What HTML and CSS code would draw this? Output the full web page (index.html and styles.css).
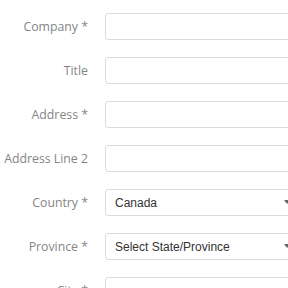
FILE: index.html
```html
<!DOCTYPE html>
<html lang="en">
<head>
    <meta charset="UTF-8">
    <meta name="viewport" content="width=device-width, initial-scale=1.0">
    <title>Contact Details</title>
    <link rel="stylesheet" href="styles.css">
</head>
<body>
    <form class="contact-form">
        <div class="form-row">
            <label class="form-label" for="company">Company *</label>
            <input class="form-input" type="text" id="company">
        </div>
        <div class="form-row">
            <label class="form-label" for="title">Title</label>
            <input class="form-input" type="text" id="title">
        </div>
        <div class="form-row">
            <label class="form-label" for="address">Address *</label>
            <input class="form-input" type="text" id="address">
        </div>
        <div class="form-row">
            <label class="form-label" for="address2">Address Line 2</label>
            <input class="form-input" type="text" id="address2">
        </div>
        <div class="form-row">
            <label class="form-label" for="country">Country *</label>
            <div class="select-wrap">
                <select class="form-input form-select" id="country">
                    <option>Canada</option>
                </select>
                <svg class="select-arrow" width="6" height="4" viewBox="0 0 6 4"><path d="M0 0h6L3 4z" fill="#666"/></svg>
            </div>
        </div>
        <div class="form-row">
            <label class="form-label" for="province">Province *</label>
            <div class="select-wrap">
                <select class="form-input form-select" id="province">
                    <option>Select State/Province</option>
                </select>
                <svg class="select-arrow" width="6" height="4" viewBox="0 0 6 4"><path d="M0 0h6L3 4z" fill="#666"/></svg>
            </div>
        </div>
        <div class="form-row">
            <label class="form-label" for="city">City *</label>
            <input class="form-input" type="text" id="city">
        </div>
    </form>
</body>
</html>
```

FILE: styles.css
```css
* {
    box-sizing: border-box;
    margin: 0;
    padding: 0;
}

body {
    background: #fff;
    overflow: hidden;
    font-family: 'Open Sans', sans-serif;
}

.contact-form {
    display: flex;
    flex-direction: column;
    gap: 17px;
    padding-top: 13px;
    width: 300px;
}

.form-row {
    display: flex;
    align-items: center;
    height: 27px;
}

.form-label {
    width: 88px;
    flex: none;
    text-align: right;
    font-size: 12.3px;
    color: #858585;
    white-space: nowrap;
    margin-right: 17px;
}

.form-input {
    width: 192px;
    height: 27px;
    border: 1px solid #dcdcdc;
    border-radius: 3px;
    background: #fff;
    font-family: 'Liberation Sans', Arial, sans-serif;
    font-size: 12px;
    color: #333;
    padding: 0 9px;
    outline: none;
}

.select-wrap {
    position: relative;
    width: 192px;
}

.form-select {
    appearance: none;
    -webkit-appearance: none;
    width: 100%;
}

.select-arrow {
    position: absolute;
    left: 179px;
    top: 11px;
}
```
